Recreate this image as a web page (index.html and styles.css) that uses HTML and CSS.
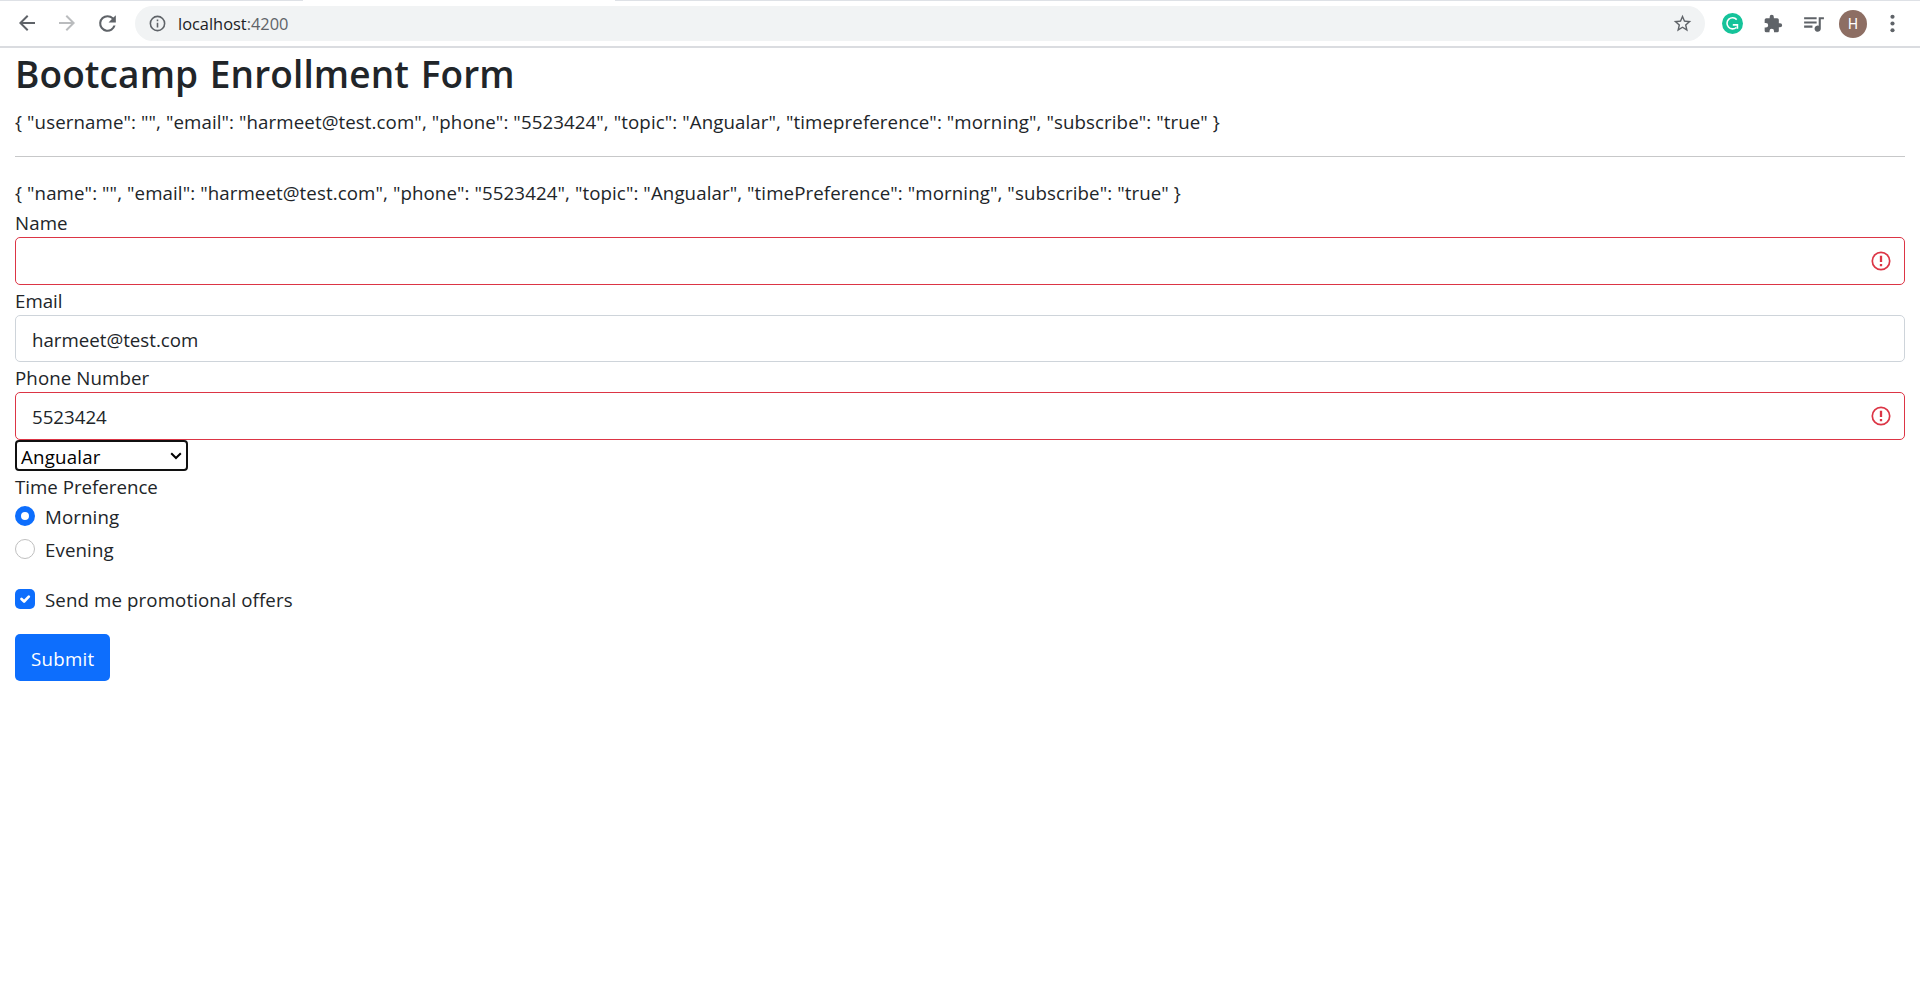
FILE: index.html
```
<!DOCTYPE html>
<html lang="en">
<head>
<meta charset="utf-8">
<title>Bootcamp Enrollment Form</title>
<link rel="stylesheet" href="styles.css">
</head>
<body>
<header class="toolbar">
  <div class="tab-edges"><span class="edge edge-left"></span><span class="edge edge-right"></span></div>
  <div class="toolbar-row">
    <nav class="nav-buttons">
      <svg class="icon" viewBox="0 0 24 24"><path d="M20 11H7.83l5.59-5.59L12 4l-8 8 8 8 1.41-1.41L7.83 13H20z"/></svg>
      <svg class="icon disabled" viewBox="0 0 24 24"><path d="M4 11h12.17l-5.59-5.59L12 4l8 8-8 8-1.41-1.41L16.17 13H4z"/></svg>
      <svg class="icon reload" viewBox="0 0 24 24"><path d="M17.65 6.35A7.96 7.96 0 0 0 12 4a8 8 0 1 0 7.73 10h-2.08A6 6 0 1 1 12 6c1.66 0 3.14.69 4.22 1.78L13 11h7V4z"/></svg>
    </nav>
    <div class="omnibox">
      <svg class="info" viewBox="0 0 24 24"><path d="M11 17h2v-6h-2zm1-15a10 10 0 1 0 0 20 10 10 0 0 0 0-20zm0 18a8 8 0 1 1 0-16 8 8 0 0 1 0 16zM11 9h2V7h-2z"/></svg>
      <span class="url"><span class="host">localhost</span><span class="port">:4200</span></span>
      <svg class="star" viewBox="0 0 24 24"><path d="M22 9.24l-7.19-.62L12 2 9.19 8.63 2 9.24l5.46 4.73L5.82 21 12 17.27 18.18 21l-1.63-7.03zM12 15.4l-3.76 2.27 1-4.28-3.32-2.88 4.38-.38L12 6.1l1.71 4.04 4.38.38-3.32 2.88 1 4.28z"/></svg>
    </div>
    <div class="extensions">
      <svg class="grammar" viewBox="0 0 20 20"><circle cx="10" cy="10" r="10" fill="#15c39a"/><path d="M14 6.300A5.300 5.300 0 1 0 13.600 13.800M10.300 11.300h4.400v3.700" fill="none" stroke="#fff" stroke-width="1.500"/></svg>
      <svg class="icon puzzle" viewBox="0 0 24 24"><path d="M20.5 11H19V7a2 2 0 0 0-2-2h-4V3.500a2.500 2.500 0 0 0-5 0V5H4a2 2 0 0 0-1.990 2v3.800H3.500a2.700 2.700 0 0 1 0 5.400H2V20a2 2 0 0 0 2 2h3.800v-1.500a2.700 2.700 0 0 1 5.400 0V22H17a2 2 0 0 0 2-2v-4h1.500a2.500 2.500 0 0 0 0-5z"/></svg>
      <svg class="icon queue" viewBox="0 0 24 24"><path d="M15 6H3v2h12zm0 4H3v2h12zM3 16h8v-2H3zM17 6v8.180A3 3 0 1 0 19 17V8h3V6z"/></svg>
      <span class="avatar">H</span>
      <svg class="icon dots" viewBox="0 0 24 24"><circle cx="12" cy="5.500" r="2"/><circle cx="12" cy="12" r="2"/><circle cx="12" cy="18.500" r="2"/></svg>
    </div>
  </div>
</header>
<main class="container">
  <h1 class="title">Bootcamp Enrollment Form</h1>
  <div class="dump dump-user">{ "username": "", "email": "harmeet@test.com", "phone": "5523424", "topic": "Angualar", "timepreference": "morning", "subscribe": "true" }</div>
  <hr class="rule">
  <form class="form">
    <div class="dump dump-form">{ "name": "", "email": "harmeet@test.com", "phone": "5523424", "topic": "Angualar", "timePreference": "morning", "subscribe": "true" }</div>
    <div class="label label-name">Name</div>
    <div class="control invalid"><span class="value"></span>
      <svg class="alert" viewBox="0 0 20 20"><circle cx="10" cy="10" r="8.700"/><path class="bang" d="M10 4.800v6.200M10 13v2.200"/></svg></div>
    <div class="label label-email">Email</div>
    <div class="control plain"><span class="value">harmeet@test.com</span></div>
    <div class="label label-phone">Phone Number</div>
    <div class="control invalid"><span class="value">5523424</span>
      <svg class="alert" viewBox="0 0 20 20"><circle cx="10" cy="10" r="8.700"/><path class="bang" d="M10 4.800v6.200M10 13v2.200"/></svg></div>
    <div class="select"><span class="option">Angualar</span>
      <svg class="chevron" viewBox="0 0 12 8"><path d="M1.200 1.200L6 6l4.800-4.800"/></svg></div>
    <div class="label label-time">Time Preference</div>
    <div class="check"><span class="radio checked"></span><span class="check-text morning">Morning</span></div>
    <div class="check"><span class="radio"></span><span class="check-text evening">Evening</span></div>
    <div class="check offers"><span class="box"><svg class="tick" viewBox="0 0 20 20"><path d="M6.500 10l2.600 2.500 4.700-4.900"/></svg></span><span class="check-text promo">Send me promotional offers</span></div>
    <div class="submit">Submit</div>
  </form>
</main>
</body>
</html>
```
FILE: styles.css
```
* { box-sizing: border-box; }
body { margin: 0; background: #fff; color: #212529; font: 18.7px/30px "Open Sans", sans-serif; white-space: nowrap; }
svg { display: block; flex: none; }
.toolbar { height: 48px; border-bottom: 2px solid #dadce0; }
.tab-edges { display: flex; justify-content: space-between; height: 1px; }
.edge { background: #dee1e6; }
.edge-left { width: 303px; }
.edge-right { width: 1305px; }
.toolbar-row { display: flex; align-items: center; height: 45px; }
.nav-buttons { display: flex; gap: 16px; padding-left: 15px; width: 135px; flex: none; }
.icon { width: 24px; height: 24px; fill: #5f6368; }
.disabled { fill: #babcbe; }
.reload { width: 25px; height: 25px; margin-right: -1px; }
.omnibox { display: flex; align-items: center; width: 1570px; height: 35px; padding: 0 12px 0 14px; border-radius: 18px; background: #f1f3f4; }
.info { width: 19px; height: 19px; fill: #5f6368; margin: 0 11px 0 -1px; }
.url { font-size: 16.4px; line-height: 30px; flex: 1; }
.host { color: #202124; }
.port { color: #5f6368; }
.star { width: 21px; height: 21px; fill: #5f6368; }
.extensions { display: flex; align-items: center; padding-left: 17px; }
.grammar { width: 21px; height: 21px; margin-right: 20px; }
.puzzle { width: 20px; height: 20px; margin-right: 18px; }
.queue { width: 25px; height: 25px; margin-right: 13px; }
.avatar { width: 28px; height: 28px; border-radius: 50%; background: #8d6e63; color: #fff; font: 14px/29px Roboto, sans-serif; text-align: center; margin-right: 13px; }
.dots { width: 25px; height: 25px; }
.container { padding: 0 15px; }
.title { margin: 0 0 9px; padding-top: 2px; height: 48px; font-size: 37px; line-height: 48px; font-weight: 600; word-spacing: 2px; letter-spacing: 0.1px; }
.dump { padding-top: 1px; height: 30px; letter-spacing: 0.093px; }
.dump-user { margin-top: 10px; }
.rule { margin: 20px 0; border: 0; height: 1px; background: #c7c8c9; }
.form { display: flex; flex-direction: column; align-items: stretch; }
.label { height: 30px; padding-top: 1px; }
.label-name { letter-spacing: 0.1px; }
.label-phone { letter-spacing: 0.1px; }
.control { display: flex; align-items: center; justify-content: space-between; height: 48px; padding: 0 13px 0 16px; border: 1px solid #ced4da; border-radius: 5px; }
.value { padding-top: 2px; }
.plain { height: 47px; }
.invalid { border-color: #dc3545; }
.alert { width: 20px; height: 20px; fill: none; stroke: #dc3545; stroke-width: 1.700; }
.bang { stroke-width: 2.300; }
.select { display: flex; align-items: center; justify-content: space-between; width: 173px; height: 31px; padding: 2px 4px 0 4px; border: 2px solid #101010; border-radius: 4px; color: #000; background: #fff; letter-spacing: 0.2px; }
.chevron { width: 12px; height: 8px; fill: none; stroke: #000; stroke-width: 2; margin-top: -2px; }
.check { display: flex; height: 30px; margin-bottom: 3px; }
.check-text { padding-top: 1px; letter-spacing: 0.11px; }
.radio { width: 20px; height: 20px; margin: 5px 10px 0 0; border: 1px solid #bfbfbf; border-radius: 50%; background: #fff; }
.checked { border: 6px solid #0d6efd; }
.offers { margin: 17px 0 20px; }
.box { width: 20px; height: 20px; margin: 5px 10px 0 0; border-radius: 5px; background: #0d6efd; }
.tick { width: 20px; height: 20px; fill: none; stroke: #fff; stroke-width: 2.700; stroke-linecap: round; stroke-linejoin: round; }
.submit { width: 95px; height: 47px; border-radius: 5px; background: #0d6efd; color: #fff; line-height: 49px; padding-left: 16px; letter-spacing: 0.25px; }
```
